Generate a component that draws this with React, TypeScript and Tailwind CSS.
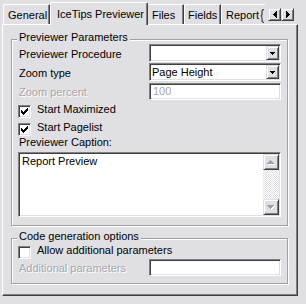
import React from "react";

const sunken =
  "border border-t-[#808080] border-l-[#808080] border-r-white border-b-white shadow-[inset_1px_1px_0_#404040,inset_-1px_-1px_0_#e0dfe3]";
const raised =
  "border border-t-[#e0dfe3] border-l-[#e0dfe3] border-r-[#404040] border-b-[#404040] shadow-[inset_1px_1px_0_#fff,inset_-1px_-1px_0_#808080]";

const CheckBox = ({ checked }: { checked?: boolean }) => (
  <span className={`flex h-[13px] w-[13px] shrink-0 items-center justify-center bg-white ${sunken}`}>
    {checked && (
      <svg width="7" height="7" viewBox="0 0 7 7" shapeRendering="crispEdges">
        <path
          d="M0 2h1v3H0zM1 3h1v3H1zM2 4h1v3H2zM3 3h1v3H3zM4 2h1v3H4zM5 1h1v3H5zM6 0h1v3H6z"
          fill="#000"
        />
      </svg>
    )}
  </span>
);

const Combo = ({ value }: { value?: string }) => (
  <div className={`flex h-[18px] w-[132px] bg-white p-[1px] ${sunken}`}>
    <span className="flex-1 truncate pl-[1px] leading-[14px]">{value}</span>
    <span className={`flex h-[14px] w-[13px] items-center justify-center bg-[#e0dfe3] ${raised}`}>
      <svg width="5" height="3" viewBox="0 0 5 3" shapeRendering="crispEdges">
        <path d="M0 0h5v1H0zM1 1h3v1H1zM2 2h1v1H2z" fill="#000" />
      </svg>
    </span>
  </div>
);

const ScrollBtn = ({ up }: { up?: boolean }) => (
  <span className={`flex h-[16px] w-[16px] items-center justify-center bg-[#e0dfe3] ${raised}`}>
    <svg width="8" height="5" viewBox="0 0 8 5" shapeRendering="crispEdges">
      {up ? (
        <>
          <path d="M4 1h1v1H4zM3 2h3v1H3zM2 3h5v1H2zM1 4h7v1H1z" fill="#fff" />
          <path d="M3 0h1v1H3zM2 1h3v1H2zM1 2h5v1H1zM0 3h7v1H0z" fill="#a0a0a4" />
        </>
      ) : (
        <>
          <path d="M1 1h7v1H1zM2 2h5v1H2zM3 3h3v1H3zM4 4h1v1H4z" fill="#fff" />
          <path d="M0 0h7v1H0zM1 1h5v1H1zM2 2h3v1H2zM3 3h1v1H3z" fill="#a0a0a4" />
        </>
      )}
    </svg>
  </span>
);

const GroupBox = ({
  title,
  className,
  children,
}: {
  title: string;
  className: string;
  children: React.ReactNode;
}) => (
  <div
    className={`relative w-[277px] border border-[#a0a0a4] pl-[7px] pr-[6px] shadow-[inset_1px_1px_0_#fff,1px_1px_0_#fff] ${className}`}
  >
    <span className="absolute -top-[9px] left-[5px] bg-[#e0dfe3] px-[2px] leading-[13px]">{title}</span>
    {children}
  </div>
);

const disabled = "text-[#a7a6aa] [text-shadow:1px_1px_0_#fff]";

export default function App() {
  return (
    <div className="h-[304px] w-[306px] overflow-hidden bg-[#e0dfe3] font-['Liberation_Sans',Arial,sans-serif] text-[11px] leading-[13px] whitespace-nowrap text-black">
      {/* tabs */}
      <div className="flex h-[24px] items-end pl-[3px]">
        <div className="h-[20px] w-[47px] rounded-tl-[2px] border-t border-l border-r border-t-white border-l-white border-r-[#404040] pt-[4px] pl-[4px] shadow-[inset_-1px_0_0_#808080]">
          General
        </div>
        <div className="relative z-10 -mb-[1px] h-[23px] w-[98px] rounded-t-[2px] border-t border-l border-r border-t-white border-l-white border-r-[#404040] bg-[#e0dfe3] pt-[5px] pl-[6px] shadow-[inset_-1px_0_0_#808080]">
          IceTips Previewer
        </div>
        <div className="h-[20px] w-[36px] border-t border-r border-t-white border-r-[#404040] pt-[4px] pl-[4px] shadow-[inset_-1px_0_0_#808080]">
          Files
        </div>
        <div className="h-[20px] w-[37px] rounded-tl-[2px] border-t border-l border-r border-t-white border-l-white border-r-[#404040] pt-[4px] pl-[3px] shadow-[inset_-1px_0_0_#808080]">
          Fields
        </div>
        <div className="flex h-[20px] rounded-tl-[2px] border-t border-l border-t-white border-l-white pl-[4px]">
          <span className="pt-[4px]">Report</span>
          <svg width="5" height="14" viewBox="0 0 5 14" className="mt-[4px] ml-[1px]">
            <path d="M4 0.5 Q2 0.5 2 3 V5 Q2 7 0.5 7 Q2 7 2 9 V11 Q2 13.5 4 13.5" fill="none" stroke="#404040" strokeWidth="1.2" />
          </svg>
        </div>
        <div className="mb-[3px] ml-[3px] flex self-end">
          <span className={`flex h-[13px] w-[13px] items-center justify-center bg-[#e0dfe3] ${raised}`}>
            <svg width="4" height="7" viewBox="0 0 4 7" shapeRendering="crispEdges">
              <path d="M3 0h1v7H3zM2 1h1v5H2zM1 2h1v3H1zM0 3h1v1H0z" fill="#000" />
            </svg>
          </span>
          <span className={`flex h-[13px] w-[13px] items-center justify-center bg-[#e0dfe3] ${raised}`}>
            <svg width="4" height="7" viewBox="0 0 4 7" shapeRendering="crispEdges">
              <path d="M0 0h1v7H0zM1 1h1v5H1zM2 2h1v3H2zM3 3h1v1H3z" fill="#000" />
            </svg>
          </span>
        </div>
      </div>

      {/* tab page */}
      <div className="ml-[2px] h-[272px] w-[296px] border-t border-l border-r border-b border-t-white border-l-white border-r-[#404040] border-b-[#404040] pt-[14px] pl-[8px] shadow-[inset_-1px_-1px_0_#808080]">
        <GroupBox title="Previewer Parameters" className="h-[187px] pt-[4px]">
          <div className="flex h-[18px]">
            <span className="mt-[4px] w-[130px]">Previewer Procedure</span>
            <Combo />
          </div>
          <div className="mt-[1px] flex h-[18px]">
            <span className="mt-[4px] w-[130px]">Zoom type</span>
            <Combo value="Page Height" />
          </div>
          <div className="mt-[2px] flex h-[17px]">
            <span className={`mt-[3px] w-[130px] ${disabled}`}>Zoom percent</span>
            <div className={`h-[17px] w-[132px] bg-white pl-[3px] leading-[15px] ${sunken} ${disabled}`}>100</div>
          </div>
          <div className="mt-[5px] -ml-[1px] flex h-[13px] items-start gap-[6px]">
            <CheckBox checked />
            <span className="-mt-[2px]">Start Maximized</span>
          </div>
          <div className="mt-[5px] -ml-[1px] flex h-[13px] items-start gap-[6px]">
            <CheckBox checked />
            <span className="-mt-[2px]">Start Pagelist</span>
          </div>
          <div className="h-[13px]">Previewer Caption:</div>
          <div className={`mt-[3px] -ml-[1px] flex h-[65px] w-[263px] bg-white p-[1px] ${sunken}`}>
            <div className="flex-1 pt-[1px] pl-[2px]">Report Preview</div>
            <div className="flex w-[16px] flex-col">
              <ScrollBtn up />
              <div className="flex-1 bg-[repeating-conic-gradient(#e0dfe3_0_25%,#fff_0_50%)] bg-[length:2px_2px]" />
              <ScrollBtn />
            </div>
          </div>
        </GroupBox>

        <GroupBox title="Code generation options" className="mt-[12px] h-[46px] pt-[7px]">
          <div className="-ml-[1px] flex h-[13px] items-start gap-[6px]">
            <CheckBox />
            <span className="-mt-[2px]">Allow additional parameters</span>
          </div>
          <div className="flex h-[17px]">
            <span className={`mt-[3px] w-[130px] ${disabled}`}>Additional parameters</span>
            <div className={`h-[17px] w-[132px] bg-white ${sunken}`} />
          </div>
        </GroupBox>
      </div>
    </div>
  );
}
